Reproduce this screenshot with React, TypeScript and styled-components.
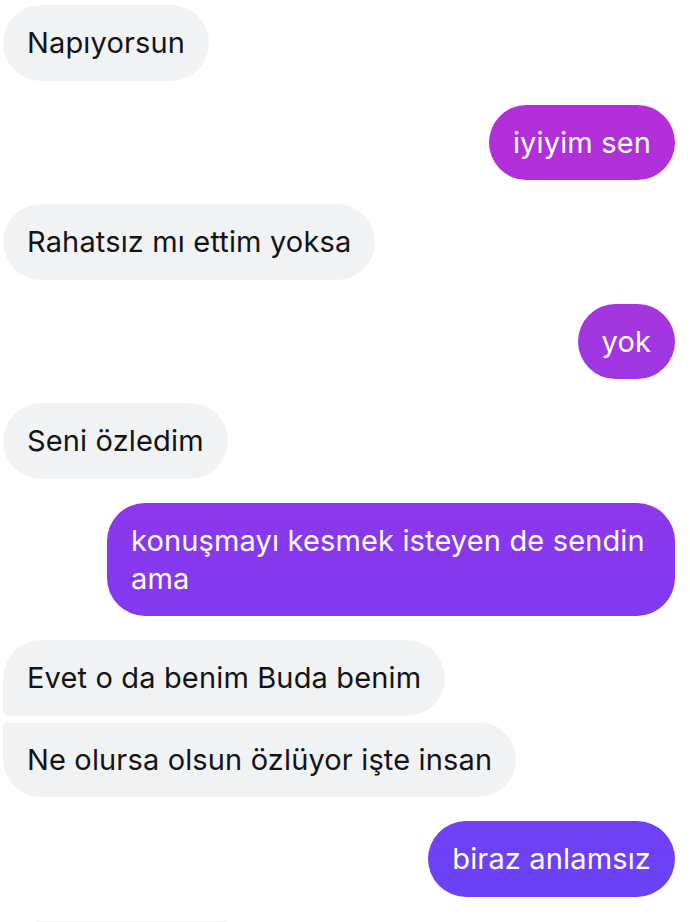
import React from "react";
import styled, { createGlobalStyle, css } from "styled-components";

const Global = createGlobalStyle`
  html, body { margin: 0; padding: 0; background: #ffffff; }
  body { font-family: Inter, "Noto Sans", "Liberation Sans", sans-serif; -webkit-font-smoothing: antialiased; }
`;

const Thread = styled.div`
  display: flex;
  flex-direction: column;
  padding: 5px 15px 0 3px;
  height: 922px;
  overflow: hidden;
  box-sizing: border-box;
`;

const Group = styled.div<{ $mine?: boolean }>`
  display: flex;
  flex-direction: column;
  align-items: ${(p) => (p.$mine ? "flex-end" : "flex-start")};
  gap: 6px;
  margin-bottom: 24px;
`;

type Pos = "single" | "first" | "last";

const Bubble = styled.div<{ $mine?: boolean; $pos?: Pos }>`
  box-sizing: border-box;
  max-width: 568px;
  padding: 19px 24px;
  font-size: 29px;
  line-height: 37.6px;
  letter-spacing: 0.15px;
  border-radius: 38px;
  ${(p) =>
    p.$mine
      ? css`
          color: #ffffff;
          background: linear-gradient(
              to bottom,
              #b92cd6 0px,
              #b22fd9 142px,
              #a236e0 341px,
              #8638ee 560px,
              #6e41f6 859px,
              #6a42f7 922px
            )
            fixed;
        `
      : css`
          color: #141414;
          background: #f0f2f4;
        `}
  ${(p) =>
    p.$pos === "first" &&
    css`
      border-bottom-left-radius: 6px;
    `}
  ${(p) =>
    p.$pos === "last" &&
    css`
      border-top-left-radius: 6px;
    `}
`;

const PeekBubble = styled.div`
  flex: none;
  width: 256px;
  height: 76px;
  border-radius: 38px;
  background: #f0f2f4;
`;

type Msg = { mine?: boolean; lines: string[] };

const groups: Msg[] = [
  { lines: ["Napıyorsun"] },
  { mine: true, lines: ["iyiyim sen"] },
  { lines: ["Rahatsız mı ettim yoksa"] },
  { mine: true, lines: ["yok"] },
  { lines: ["Seni özledim"] },
  { mine: true, lines: ["konuşmayı kesmek isteyen de sendin ama"] },
  { lines: ["Evet o da benim Buda benim", "Ne olursa olsun özlüyor işte insan"] },
  { mine: true, lines: ["biraz anlamsız"] },
];

export default function App() {
  return (
    <>
      <Global />
      <Thread>
        {groups.map((g, i) => (
          <Group key={i} $mine={g.mine}>
            {g.lines.map((t, j) => {
              const pos: Pos =
                g.lines.length === 1 ? "single" : j === 0 ? "first" : "last";
              return (
                <Bubble key={j} $mine={g.mine} $pos={pos}>
                  {t}
                </Bubble>
              );
            })}
          </Group>
        ))}
        <PeekBubble />
      </Thread>
    </>
  );
}
